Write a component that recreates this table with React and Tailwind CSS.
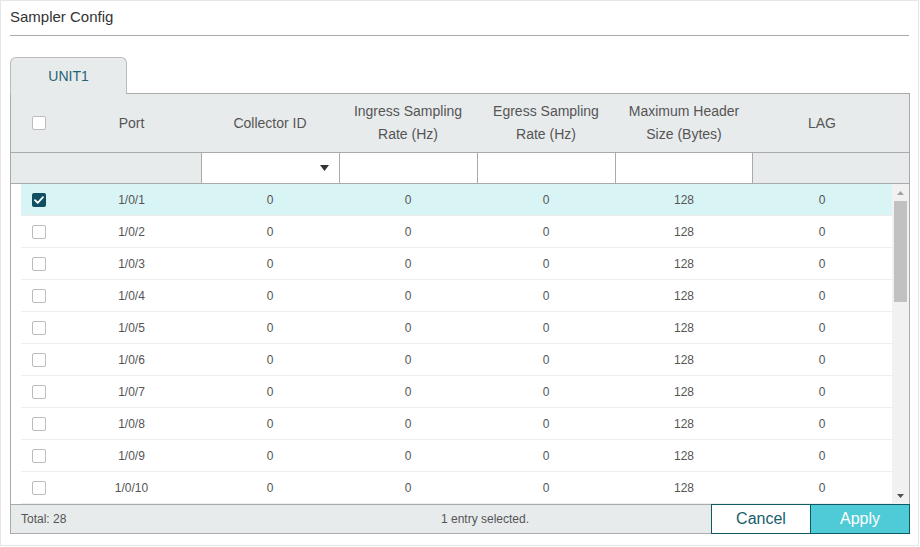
import React from 'react';

const rows = Array.from({ length: 10 }, (_, i) => ({
  port: `1/0/${i + 1}`,
  collector: 0,
  ingress: 0,
  egress: 0,
  header: 128,
  lag: 0,
}));

const Checkbox = ({ checked }) =>
  checked ? (
    <span className="flex h-[14px] w-[14px] items-center justify-center rounded-[2px] bg-[#0f4f5f]">
      <svg width="10" height="8" viewBox="0 0 10 8" fill="none">
        <path d="M1 4.2 3.7 6.8 9 1.2" stroke="#fff" strokeWidth="1.8" strokeLinecap="round" strokeLinejoin="round" />
      </svg>
    </span>
  ) : (
    <span className="block h-[14px] w-[14px] rounded-[2px] border border-[#bdbdbd] bg-white" />
  );

const App = () => {
  return (
    <div
      className="h-[547px] w-[920px] bg-white"
      style={{ fontFamily: '"Liberation Sans", Arial, sans-serif' }}
    >
      <div className="flex h-[546px] w-[919px] flex-col border border-[#e6e6e6] px-[9px]">
        <div className="flex h-[35px] items-center border-b border-[#aaaaaa] pb-px text-[15px] text-[#333]">
          Sampler Config
        </div>

        <div className="mt-[21px] flex">
          <div className="relative z-10 -mb-px flex h-[37px] w-[117px] items-center justify-center rounded-t-[6px] border border-b-0 border-[#bbbbbb] bg-[#e8ebec] pt-px text-[14px] text-[#1c6575]">
            UNIT1
          </div>
        </div>

        <div className="flex w-[900px] flex-col border border-[#aaaaaa]">
          {/* header */}
          <div className="flex h-[59px] items-center border-b border-[#aaaaaa] bg-[#e8ebec] text-[14px] leading-[23px] text-[#555]">
            <div className="w-[51px] pl-[21px]">
              <Checkbox />
            </div>
            <div className="w-[139px] text-center">Port</div>
            <div className="w-[138px] text-center">Collector ID</div>
            <div className="w-[138px] text-center">Ingress Sampling<br />Rate (Hz)</div>
            <div className="w-[138px] text-center">Egress Sampling<br />Rate (Hz)</div>
            <div className="w-[138px] text-center">Maximum Header<br />Size (Bytes)</div>
            <div className="w-[138px] text-center">LAG</div>
          </div>

          {/* filter row */}
          <div className="flex h-[31px] border-b border-[#aaaaaa] bg-[#e8ebec]">
            <div className="w-[190px]" />
            <div className="flex w-[138px] items-center justify-end border-l border-[#aaaaaa] bg-white pr-[10px]">
              <svg width="9" height="6" viewBox="0 0 9 6">
                <path d="M0 0h9L4.5 6z" fill="#333" />
              </svg>
            </div>
            <div className="w-[138px] border-l border-[#aaaaaa] bg-white" />
            <div className="w-[138px] border-l border-[#aaaaaa] bg-white" />
            <div className="w-[138px] border-x border-[#aaaaaa] bg-white" />
            <div className="flex-1" />
          </div>

          {/* body */}
          <div className="flex h-[320px]">
            <div className="ml-[10px] flex w-[871px] flex-col overflow-hidden text-[12px] text-[#555]">
              {rows.map((r, i) => (
                <div
                  key={r.port}
                  className={`flex h-[32px] shrink-0 items-center border-b border-[#eeeeee] ${i === 0 ? 'bg-[#d9f4f5]' : ''}`}
                >
                  <div className="w-[41px] pl-[11px]">
                    <Checkbox checked={i === 0} />
                  </div>
                  <div className="w-[139px] text-center">{r.port}</div>
                  <div className="w-[138px] text-center">{r.collector}</div>
                  <div className="w-[138px] text-center">{r.ingress}</div>
                  <div className="w-[138px] text-center">{r.egress}</div>
                  <div className="w-[138px] text-center">{r.header}</div>
                  <div className="w-[138px] text-center">{r.lag}</div>
                </div>
              ))}
            </div>
            {/* scrollbar */}
            <div className="flex w-[17px] flex-col items-center bg-[#f1f1f1]">
              <div className="flex h-[17px] items-center justify-center">
                <svg width="7" height="4" viewBox="0 0 7 4">
                  <path d="M0 4h7L3.5 0z" fill="#a3a3a3" />
                </svg>
              </div>
              <div className="h-[101px] w-[13px] bg-[#c1c1c1]" />
              <div className="flex-1" />
              <div className="flex h-[17px] items-center justify-center">
                <svg width="7" height="4" viewBox="0 0 7 4">
                  <path d="M0 0h7L3.5 4z" fill="#505050" />
                </svg>
              </div>
            </div>
          </div>

          {/* footer */}
          <div className="flex h-[29px] items-stretch border-t border-[#aaaaaa] bg-[#e8ebec] text-[12px] text-[#555]">
            <div className="flex w-[430px] items-center pl-[10px]">Total: 28</div>
            <div className="flex flex-1 items-center">1 entry selected.</div>
            <button className="-mt-px -mb-px flex w-[100px] items-center justify-center border border-[#0e5966] bg-white text-[16px] text-[#17606c]">
              Cancel
            </button>
            <button className="-mt-px -mb-px -mr-px flex w-[99px] items-center justify-center border border-l-0 border-[#0e5966] bg-[#4ecbd6] text-[16px] text-white">
              Apply
            </button>
          </div>
        </div>
      </div>
    </div>
  );
};

export default App;
